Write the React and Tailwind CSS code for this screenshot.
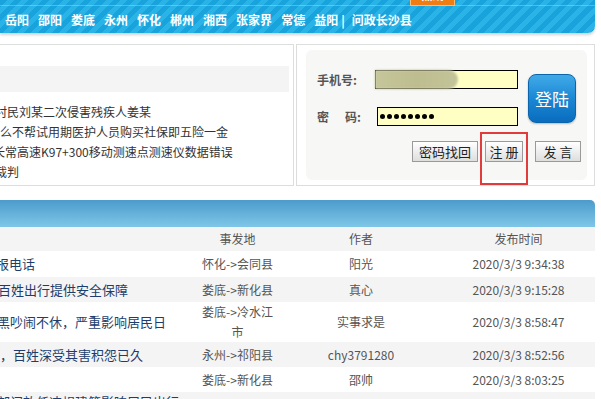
const cjk = "font-['Noto_Sans_CJK_SC','Noto_Sans',sans-serif]";

const cities = ['岳阳', '邵阳', '娄底', '永州', '怀化', '郴州', '湘西', '张家界', '常德'];

const notices = [
  { text: '村民刘某二次侵害残疾人姜某', shift: 'ml-[-6px]' },
  { text: '么不帮试用期医护人员购买社保即五险一金', shift: 'ml-[-1px]' },
  { text: '长常高速K97+300移动测速点测速仪数据错误', shift: 'ml-[-8px]' },
  { text: '裁判', shift: 'ml-[-6px]' },
];

const rows = [
  { title: '报电话', shift: 'ml-[-4px]', place: '怀化->会同县', author: '阳光', time: '2020/3/3 9:34:38', h: 'h-[26px] items-center', gray: false },
  { title: '百姓出行提供安全保障', shift: 'ml-[-2px]', place: '娄底->新化县', author: '真心', time: '2020/3/3 9:15:28', h: 'h-[25px] items-center', gray: true },
  { title: '黑吵闹不休，严重影响居民日', shift: 'ml-[-3px]', place: '娄底->冷水江市', author: '实事求是', time: '2020/3/3 8:58:47', h: 'h-[40px] items-center', gray: false },
  { title: '，百姓深受其害积怨已久', shift: 'ml-[0px]', place: '永州->祁阳县', author: 'chy3791280', time: '2020/3/3 8:52:56', h: 'h-[25px] items-center', gray: true },
  { title: '', shift: '', place: '娄底->新化县', author: '邵帅', time: '2020/3/3 8:03:25', h: 'h-[25px] items-center', gray: false },
  { title: '部门放任违规建筑影响居民出行', shift: 'ml-[-3px]', place: '', author: '', time: '', h: 'h-[25px] items-start', gray: true },
];

function Btn({ children, className }) {
  return (
    <button
      className={`h-[21px] border border-[#9a9a9a] bg-gradient-to-b from-[#ffffff] to-[#dedede] text-[13px] leading-[19px] text-[#222] ${className}`}
    >
      {children}
    </button>
  );
}

export default function App() {
  return (
    <div className={`relative w-[601px] h-[399px] overflow-hidden bg-white ${cjk}`}>
      {/* city nav band */}
      <div className="relative w-[595px] h-[33px] rounded-br-[7px] bg-[repeating-linear-gradient(135deg,#18a3dc_0px,#18a3dc_5px,#2ab3e6_5px,#2ab3e6_10px)] shadow-[0_2px_3px_rgba(0,0,0,0.18)] flex items-end pb-[5px] pl-[5px]">
        <div className="absolute left-0 right-0 top-[5px] h-px bg-white/25" />
        <div className="flex items-center gap-[9px] text-[12px] leading-[16px] font-bold text-white">
          {cities.map((c) => (
            <span key={c}>{c}</span>
          ))}
          <span>益阳</span>
        </div>
        <span className="ml-[3px] text-[12px] leading-[16px] font-bold text-white">|</span>
        <span className="ml-[7px] text-[12px] leading-[16px] font-bold text-white">问政长沙县</span>
        <div className="absolute left-[410px] top-[-13px] w-[45px] h-[19px] bg-[#f07c14] border border-[#f8be78] text-center text-[11px] leading-[14px] font-bold text-white">
          热线
        </div>
      </div>

      {/* panels */}
      <div className="flex mt-[11px] h-[142px]">
        <div className="ml-[-10px] w-[304px] border border-[#dddddd] pt-[21px] pr-[4px] overflow-hidden">
          <div className="h-[26px] bg-[#f4f4f4]" />
          <div className="pt-[10px] pl-[10px] text-[12px] leading-[20px] text-[#333]">
            {notices.map((n) => (
              <div key={n.text} className={`whitespace-nowrap ${n.shift}`}>
                {n.text}
              </div>
            ))}
          </div>
        </div>

        <div className="ml-[2px] w-[299px] border border-[#dddddd] pt-[5px] pl-[9px] pr-[7px]">
          <div className="h-[130px] rounded-[6px] bg-[#f7f7f6] pt-[20px] pl-[11px]">
            <div className="flex">
              <div className="w-[201px]">
                <div className="flex items-center h-[19px]">
                  <span className="w-[58px] text-[12px] font-bold text-[#555]">手机号:</span>
                  <div className="relative w-[143px] h-[19px] border border-black bg-[#ffffc4]">
                    <div className="absolute left-[-1px] top-[-1px] w-[83px] h-[19px] rounded-r-full bg-gradient-to-r from-[#c6c69c] via-[#bdbd90] to-[#c4c49a] blur-[1px]" />
                  </div>
                </div>
                <div className="flex items-center h-[19px] mt-[18px]">
                  <span className="w-[60px] text-[12px] font-bold text-[#555]">
                    密<span className="ml-[16px]">码:</span>
                  </span>
                  <div className="w-[141px] h-[19px] border border-black bg-[#ffffc4] flex items-center gap-[2px] pl-[2px]">
                    {[0, 1, 2, 3, 4, 5, 6, 7].map((i) => (
                      <span key={i} className="w-[5px] h-[5px] rounded-full bg-black" />
                    ))}
                  </div>
                </div>
              </div>
              <button className="ml-[10px] mt-[4px] w-[48px] h-[49px] rounded-[8px] border border-[#0a65ad] bg-gradient-to-b from-[#40aae8] via-[#1a88d4] to-[#0a6cbe] text-[17px] text-white shadow-[0_1px_2px_rgba(0,0,0,0.25)]">
                登陆
              </button>
            </div>
            <div className="flex mt-[15px] pl-[95px]">
              <Btn className="w-[66px]">密码找回</Btn>
              <Btn className="w-[38px] ml-[7px]">注 册</Btn>
              <Btn className="w-[46px] ml-[12px]">发 言</Btn>
            </div>
          </div>
        </div>
      </div>

      {/* list header band */}
      <div className="mt-[14px] w-[595px] h-[27px] rounded-tr-[5px] bg-gradient-to-b from-[#4b9bcc] to-[#7fc7e8]" />

      {/* table */}
      <div className="w-[595px] text-[12px] text-[#555]">
        <div className="grid grid-cols-[195px_85px_162px_153px] h-[24px] items-center bg-[#f4f4f4] text-center">
          <span />
          <span>事发地</span>
          <span>作者</span>
          <span>发布时间</span>
        </div>
        {rows.map((r, i) => (
          <div
            key={i}
            className={`grid grid-cols-[195px_85px_162px_153px] text-center leading-[20px] ${r.h} ${r.gray ? 'bg-[#f4f4f4]' : 'bg-white'}`}
          >
            <div className="overflow-hidden text-left">
              <div className={`whitespace-nowrap text-[13px] text-[#1d3d6c] ${r.shift}`}>{r.title}</div>
            </div>
            <span className="px-[4px]">{r.place}</span>
            <span>{r.author}</span>
            <span>{r.time}</span>
          </div>
        ))}
      </div>

      {/* annotation box */}
      <div className="absolute left-[480px] top-[132px] w-[48px] h-[53px] border-2 border-[#e23b3b]" />
    </div>
  );
}
